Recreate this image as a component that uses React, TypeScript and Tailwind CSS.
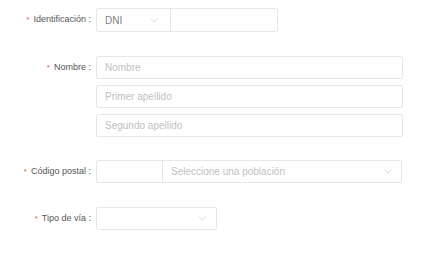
function Label({ text }: { text: string }) {
  return (
    <div className="w-[92px] shrink-0 flex items-center justify-end pr-[1px] text-[9px] text-[#555]">
      <span className="text-[#e5534b] mr-[4px] text-[8px]">*</span>
      <span>{text} :</span>
    </div>
  );
}

function Chevron() {
  return (
    <svg width="8" height="5" viewBox="0 0 8 5" fill="none" className="text-[#cfcfcf]">
      <polyline points="0.5,0.7 4,4.2 7.5,0.7" stroke="currentColor" strokeWidth="0.9" />
    </svg>
  );
}

function Field({ placeholder }: { placeholder: string }) {
  return (
    <div className="w-[307px] h-[23px] border border-[#e6e6e6] rounded-[2px] flex items-center px-[8px] text-[10px] text-[#c0c0c0]">
      {placeholder}
    </div>
  );
}

export default function App() {
  return (
    <div
      className="w-[442px] h-[272px] bg-white pt-[8px] flex flex-col"
      style={{ fontFamily: '"Liberation Sans", Arial, sans-serif' }}
    >
      <div className="flex h-[24px]">
        <Label text="Identificación" />
        <div className="ml-[4px] flex border border-[#e6e6e6] rounded-[2px] h-[24px]">
          <div className="w-[73px] flex items-center justify-between pl-[8px] pr-[12px] text-[10px] text-[#808080]">
            <span>DNI</span>
            <Chevron />
          </div>
          <div className="w-[107px] border-l border-[#e6e6e6]" />
        </div>
      </div>

      <div className="flex mt-[24px]">
        <div className="w-[92px] shrink-0 h-[23px] flex">
          <Label text="Nombre" />
        </div>
        <div className="ml-[4px] flex flex-col gap-[6px]">
          <Field placeholder="Nombre" />
          <Field placeholder="Primer apellido" />
          <Field placeholder="Segundo apellido" />
        </div>
      </div>

      <div className="flex h-[23px] mt-[23px]">
        <Label text="Código postal" />
        <div className="ml-[4px] flex border border-[#e6e6e6] rounded-[2px] h-[23px]">
          <div className="w-[65px]" />
          <div className="w-[239px] border-l border-[#e6e6e6] flex items-center justify-between pl-[8px] pr-[9px] text-[10px] text-[#c0c0c0]">
            <span>Seleccione una población</span>
            <Chevron />
          </div>
        </div>
      </div>

      <div className="flex h-[23px] mt-[24px]">
        <Label text="Tipo de vía" />
        <div className="ml-[4px] w-[121px] h-[23px] border border-[#e6e6e6] rounded-[2px] flex items-center justify-end pr-[10px]">
          <Chevron />
        </div>
      </div>
    </div>
  );
}
